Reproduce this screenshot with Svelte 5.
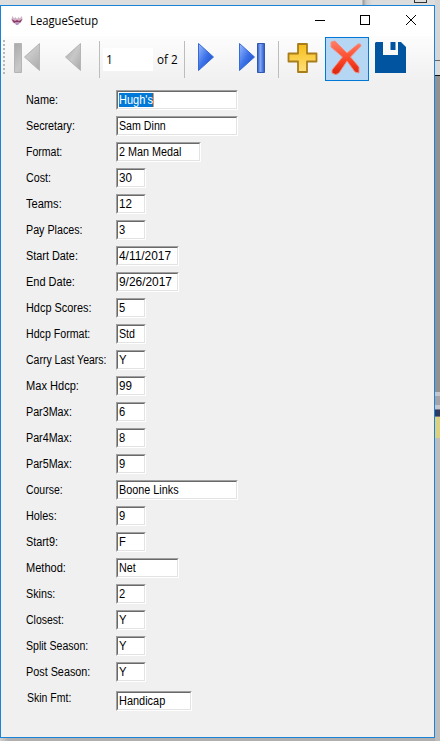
<script>
  const fields = [
    ['Name:', 31.7, "Hugh's", 34, 122],
    ['Secretary:', 49.2, 'Sam Dinn', 47, 122],
    ['Format:', 36, '2 Man Medal', 62, 85],
    ['Cost:', 25, '30', 12.6, 30],
    ['Teams:', 36, '12', 12.6, 30],
    ['Pay Places:', 56.2, '3', 6.5, 30],
    ['Start Date:', 51.6, '4/11/2017', 52.6, 63],
    ['End Date:', 48.5, '9/26/2017', 52.6, 63],
    ['Hdcp Scores:', 65.4, '5', 6.5, 30],
    ['Hdcp Format:', 64.6, 'Std', 16, 30],
    ['Carry Last Years:', 80.4, 'Y', 7.5, 30],
    ['Max Hdcp:', 52.6, '99', 12.6, 30],
    ['Par3Max:', 45.6, '6', 6.5, 30],
    ['Par4Max:', 45.6, '8', 6.5, 30],
    ['Par5Max:', 45.6, '9', 6.5, 30],
    ['Course:', 36.6, 'Boone Links', 59.5, 122],
    ['Holes:', 30.7, '9', 6.5, 30],
    ['Start9:', 31.6, 'F', 6.5, 30],
    ['Method:', 39.6, 'Net', 17, 63],
    ['Skins:', 29.6, '2', 6.5, 30],
    ['Closest:', 37.6, 'Y', 7.5, 30],
    ['Split Season:', 62.5, 'Y', 7.5, 30],
    ['Post Season:', 64, 'Y', 7.5, 30],
    ['Skin Fmt:', 44.6, 'Handicap', 46.5, 76]
  ];

  // Condenses a run of text horizontally to the given width.
  function fit(node, width) {
    node.style.transform = `scaleX(${width / node.offsetWidth})`;
  }
</script>

<svelte:head><title>LeagueSetup</title></svelte:head>

<div class="desktop">
  <div class="behind top"></div>
  <div class="behind side"></div>
  <div class="behind box"></div>
  <div class="window">
    <header>
      <svg class="app" width="12" height="11" viewBox="0 0 12 11">
        <path d="M1.5 1Q-1 6 3 8Q6 11 9 8Q13 5 10.5 1L9 3.5L7.5 2L6 4L4.5 2L3 3.5Z" fill="#d3b3c8" />
        <path d="M.5 4L4 6L6 5L8 6L11.5 4L9 8L6 7L3 8Z" fill="#8b3560" />
        <path d="M4 7h5L7 10H5Z" fill="#b795c0" />
      </svg>
      <h1><span use:fit={68.5}>LeagueSetup</span></h1>
      <svg class="controls" width="102" height="12" viewBox="0 0 102 12" fill="none" stroke="#000">
        <path d="M0 6.5h10M45.5 1.5h9v9h-9z" shape-rendering="crispEdges" />
        <path d="M91 1L101 11M101 1L91 11" />
      </svg>
    </header>

    <nav>
      <i class="grip"></i>
      <svg class="first" width="26" height="32" viewBox="0 0 26 32">
        <defs>
          <linearGradient id="gray" x2="1" y2="1"><stop stop-color="#aaa" /><stop offset=".5" stop-color="#c8c8c8" /><stop offset="1" stop-color="#a8a8a8" /></linearGradient>
          <linearGradient id="blue" x2="1" y2="1"><stop stop-color="#9bbcff" /><stop offset=".5" stop-color="#3a70e8" /><stop offset="1" stop-color="#1746bd" /></linearGradient>
          <linearGradient id="bar"><stop stop-color="#345bb9" /><stop offset=".4" stop-color="#83aaf8" /><stop offset="1" stop-color="#2456c5" /></linearGradient>
          <linearGradient id="gold" x2="0" y2="1"><stop stop-color="#f5bd18" /><stop offset="1" stop-color="#ffe079" /></linearGradient>
          <linearGradient id="red" x2="0" y2="1"><stop stop-color="#ff8068" /><stop offset=".6" stop-color="#fa4325" /><stop offset="1" stop-color="#d9250d" /></linearGradient>
        </defs>
        <path d="M.5 1.5h7v29h-7zM25.5 1.5v27L10.5 15Z" fill="url(#gray)" stroke="#b5b5b5" />
      </svg>
      <svg class="prev" width="16" height="32" viewBox="0 0 16 32"><path d="M15.5 1.5v27L.5 15Z" fill="url(#gray)" stroke="#b5b5b5" /></svg>
      <i class="sep s1"></i>
      <div class="position">1</div>
      <div class="count"><span use:fit={20.5}>of 2</span></div>
      <i class="sep s2"></i>
      <svg class="next" width="16" height="32" viewBox="0 0 16 32"><path d="M.5 1.5v27L15.5 15Z" fill="url(#blue)" stroke="#376bd2" /></svg>
      <svg class="last" width="27" height="32" viewBox="0 0 27 32">
        <path d="M.5 1.5v27L15.5 15Z" fill="url(#blue)" stroke="#376bd2" />
        <path d="M18.5 1.5h7v29h-7z" fill="url(#bar)" stroke="#3157ae" />
      </svg>
      <i class="sep s3"></i>
      <svg class="add" width="32" height="32" viewBox="0 0 32 32"><path d="M11 2h9v9.500h9.500v8H20v10.500h-9V19.500H1.500v-8H11Z" fill="url(#gold)" stroke="#a97d1c" stroke-width="1.800" stroke-linejoin="round" /></svg>
      <div class="delete">
        <svg width="34" height="36" viewBox="0 0 34 36">
          <path d="M5 1L17 13L28 4Q31 3 31 6L20.500 17L29 27L29 33L25 32L17 21L9 33Q6 36 2 33L2 30L12.500 17L1 7L1 2Z" fill="url(#red)" stroke="#f08f85" stroke-width="1" stroke-linejoin="round" />
        </svg>
      </div>
      <svg class="save" width="31" height="31" viewBox="0 0 31 31">
        <path d="M1 0H8V13H23V0H26L31 5V31H0V1Z" fill="#0054a0" />
        <path d="M15.500 0h5v8h-5z" fill="#0054a0" />
      </svg>
    </nav>

    <main>
      {#each fields as [label, labelWidth, value, valueWidth, boxWidth], i}
        <div class="row" class:final={i === fields.length - 1}>
          <div class="label"><span use:fit={labelWidth}>{label}</span></div>
          <div class="field" style:width="{boxWidth}px">
            <div class="inner"><span class:selected={i === 0} use:fit={valueWidth}>{value}</span></div>
          </div>
        </div>
      {/each}
    </main>
  </div>
</div>

<style>
  :global(body) { margin: 0; }
  .desktop { position: relative; width: 440px; height: 741px; overflow: hidden; background: linear-gradient(90deg, #d0d0d0, #b0b0b0 8px); box-sizing: border-box; padding-top: 5px; }
  .behind { position: absolute; }
  .top { left: 0; top: 0; width: 440px; height: 5px; background: linear-gradient(90deg, #dedede 362px, #999 363px, #c8c8c8 366px, #ddd 372px); }
  .side { left: 435px; top: 0; width: 5px; height: 741px; background: linear-gradient(#d6d6d6 60px, #666 60px 61px, #dadada 61px 75px, #111 75px 76px, #929292 76px 392px, #c5c5ca 392px 396px, #a3a3a9 396px 405px, #c5c5ca 405px 409px, #77778d 409px 410px, #2b3c60 410px 416px, #777587 416px 417px, #dbd180 417px 438px, #bdbdbd 438px); }
  .box { left: 414px; top: 0; width: 11px; height: 2px; border: 1px solid #333; border-top: 0; }
  .window { position: relative; box-sizing: border-box; width: 435px; height: 733px; border: 1px solid #1883d7; background: #f0f0f0; font-family: "Liberation Sans", Arial, sans-serif; color: #000; }
  header { height: 30px; background: #fff; display: flex; align-items: center; }
  .app { margin: -2px 7px 0 10px; }
  h1 { margin: 0; font: 12px/16px "Open Sans", "Noto Sans", sans-serif; width: 285px; }
  .controls { margin-top: -2px; }
  span { display: inline-block; white-space: pre; transform-origin: 0 50%; }
  nav { height: 46px; display: flex; align-items: flex-start; background: linear-gradient(#fdfdfd, #f0f0f0); }
  nav svg { display: block; flex: none; }
  nav > * { flex: none; }
  .grip { width: 2px; height: 34px; margin: 4px 9px 0 2px; background: repeating-linear-gradient(#b8b8b8 0 2px, transparent 2px 4px); }
  .first { margin-top: 6px; }
  .prev { margin: 6px 0 0 25px; }
  .sep { width: 1px; height: 37px; margin-top: 5px; background: #bdbdbd; }
  .s1 { margin-left: 18px; }
  .position { width: 47px; height: 23px; margin: 12px 0 0 3px; padding-left: 3px; background: #fff; font: 12px/23px "Open Sans", sans-serif; }
  .count { width: 27px; margin: 12px 0 0 4px; font: 12px/23px "Open Sans", sans-serif; }
  .next { margin: 6px 0 0 13px; }
  .last { margin: 6px 0 0 25px; }
  .s3 { margin-left: 12px; }
  .add { margin: 6px 0 0 8px; }
  .delete { box-sizing: border-box; width: 44px; height: 44px; margin: 1px 0 0 6px; padding: 2px 0 0 4px; border: 1px solid #0078d7; background: #b5d7f3; }
  .save { margin: 6px 0 0 6px; }
  main { padding: 8px 0 0 24.6px; display: flex; flex-direction: column; gap: 6px; }
  .row { height: 20px; display: flex; font-size: 12px; line-height: 21px; }
  .label { width: 90.4px; }
  .field { box-sizing: border-box; height: 20px; border: 1px solid; border-color: #a0a0a0 #fff #fff #a0a0a0; }
  .inner { box-sizing: border-box; height: 18px; border: 1px solid; border-color: #696969 #e3e3e3 #e3e3e3 #696969; background: #fff; padding: 1px 0 0 1px; line-height: 15px; }
  .selected { background: #0078d7; color: #fff; box-shadow: 1px 0 #ff8728; line-height: 13px; padding-top: 1px; vertical-align: top; }
  .final .label { padding-left: 1px; width: 89.4px; }
  .final .field { margin-top: 3px; }
</style>
